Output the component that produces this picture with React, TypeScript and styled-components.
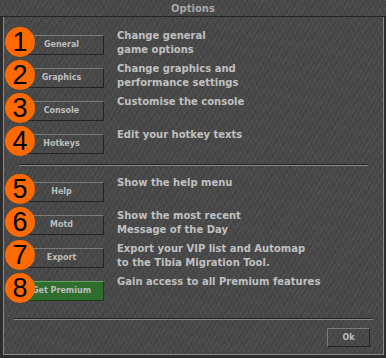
import React from "react";
import styled, { createGlobalStyle, css } from "styled-components";

const GlobalStyle = createGlobalStyle`
  html, body {
    margin: 0;
    padding: 0;
    background: #2a2a2a;
  }
`;

const stone = css`
  background-color: #494949;
  background-image:
    repeating-linear-gradient(118deg, rgba(255, 255, 255, 0.045) 0px, rgba(255, 255, 255, 0.045) 1px, transparent 1px, transparent 4px),
    repeating-linear-gradient(62deg, rgba(0, 0, 0, 0.07) 0px, rgba(0, 0, 0, 0.07) 1px, transparent 1px, transparent 5px),
    repeating-linear-gradient(135deg, rgba(0, 0, 0, 0.05) 0px, rgba(0, 0, 0, 0.05) 2px, transparent 2px, transparent 7px);
`;

const Window = styled.div`
  width: 386px;
  height: 358px;
  box-sizing: border-box;
  background: #2c2c2c;
  padding: 0 2px 3px 3px;
  display: flex;
  flex-direction: column;
  font-family: "DejaVu Sans", Verdana, sans-serif;
`;

const TitleBar = styled.div`
  ${stone};
  height: 16px;
  margin: 0 -2px 0 -3px;
  display: flex;
  align-items: center;
  justify-content: center;
  font-size: 10px;
  font-weight: bold;
  color: #a9a9a9;
  border-bottom: 1px solid #242424;
`;

const Body = styled.div`
  ${stone};
  flex: 1;
  border: 1px solid #8a8a8a;
  border-top: none;
  padding: 15px 0 0 1px;
  display: flex;
  flex-direction: column;
`;

const Row = styled.div`
  height: 33px;
  display: flex;
  align-items: flex-start;
`;

const ButtonCell = styled.div`
  position: relative;
  width: 112px;
  flex-shrink: 0;
  padding-left: 12px;
  box-sizing: border-box;
`;

const Badge = styled.div`
  position: absolute;
  left: 0;
  top: -5px;
  width: 30px;
  height: 30px;
  border-radius: 50%;
  background: #ff6a00;
  color: #000;
  font-family: "Liberation Sans", Arial, sans-serif;
  font-size: 27px;
  line-height: 30px;
  text-align: center;
  z-index: 2;
`;

const Button = styled.button<{ $premium?: boolean }>`
  width: 87px;
  height: 20px;
  margin: 0;
  padding: 0 0 0 2px;
  box-sizing: border-box;
  font-family: "DejaVu Sans", Verdana, sans-serif;
  font-size: 8px;
  font-weight: bold;
  color: #bdbdbd;
  border: 1px solid;
  border-color: ${(p) => (p.$premium ? "#5fa85f #1a3d1a #1a3d1a #5fa85f" : "#7a7a7a #232323 #232323 #7a7a7a")};
  background: ${(p) => (p.$premium ? "#2f6e2f" : "transparent")};
  ${(p) => (p.$premium ? "" : stone)};
  text-align: center;
  cursor: pointer;
`;

const Description = styled.div`
  margin-top: -3px;
  font-size: 10px;
  font-weight: bold;
  line-height: 14px;
  color: #c0c0c0;
`;

const Separator = styled.div<{ $inset: number; $top?: number; $bottom?: number }>`
  height: 1px;
  margin: ${(p) => p.$top ?? 0}px ${(p) => p.$inset + 1}px ${(p) => p.$bottom ?? 0}px ${(p) => p.$inset}px;
  border-top: 1px solid #242424;
  background: #8a8a8a;
`;

const Footer = styled.div`
  display: flex;
  justify-content: flex-end;
  padding: 8px 13px 0 0;
`;

const OkButton = styled(Button)`
  width: 43px;
  height: 19px;
  padding: 0;
`;

type RowData = { n: number; label: string; text: string[]; premium?: boolean };

const rows: RowData[] = [
  { n: 1, label: "General", text: ["Change general", "game options"] },
  { n: 2, label: "Graphics", text: ["Change graphics and", "performance settings"] },
  { n: 3, label: "Console", text: ["Customise the console"] },
  { n: 4, label: "Hotkeys", text: ["Edit your hotkey texts"] },
];

const rows2: RowData[] = [
  { n: 5, label: "Help", text: ["Show the help menu"] },
  { n: 6, label: "Motd", text: ["Show the most recent", "Message of the Day"] },
  { n: 7, label: "Export", text: ["Export your VIP list and Automap", "to the Tibia Migration Tool."] },
  { n: 8, label: "Get Premium", text: ["Gain access to all Premium features"], premium: true },
];

const OptionRow = ({ row }: { row: RowData }) => (
  <Row>
    <ButtonCell>
      <Badge>{row.n}</Badge>
      <Button $premium={row.premium}>{row.label}</Button>
    </ButtonCell>
    <Description>
      {row.text.map((t) => (
        <div key={t}>{t}</div>
      ))}
    </Description>
  </Row>
);

export default function App() {
  return (
    <>
      <GlobalStyle />
      <Window>
        <TitleBar>Options</TitleBar>
        <Body>
          {rows.map((r) => (
            <OptionRow key={r.n} row={r} />
          ))}
          <Separator $inset={14} $bottom={13} />
          {rows2.map((r) => (
            <OptionRow key={r.n} row={r} />
          ))}
          <Separator $inset={9} $top={7} />
          <Footer>
            <OkButton>Ok</OkButton>
          </Footer>
        </Body>
      </Window>
    </>
  );
}
